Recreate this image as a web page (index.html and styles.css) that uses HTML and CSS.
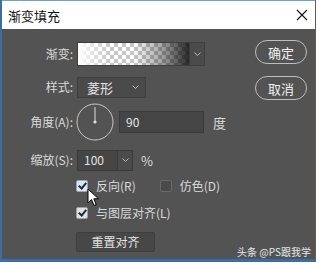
FILE: index.html
```html
<!DOCTYPE html>
<html lang="zh">
<head>
  <meta charset="UTF-8">
  <title>渐变填充</title>
  <link rel="stylesheet" href="styles.css">
</head>
<body>
  <div class="window">
    <div class="titlebar">
      <span class="title">渐变填充</span>
      <svg class="close" width="12" height="12" viewBox="0 0 12 12"><path d="M1 1L11 11M11 1L1 11" stroke="#111" stroke-width="1.1"/></svg>
    </div>

    <div class="body">
      <div class="form">
        <div class="row grad-row">
          <span class="label">渐变:</span>
          <div class="gradient">
            <div class="swatch"></div>
            <div class="drop"><svg width="7" height="5" viewBox="0 0 7 5"><path d="M0.5 0.5L3.5 3.5L6.5 0.5" stroke="#bbb" fill="none"/></svg></div>
          </div>
        </div>

        <div class="row style-row">
          <span class="label">样式:</span>
          <div class="select">
            <span>菱形</span>
            <svg width="7" height="5" viewBox="0 0 7 5"><path d="M0.5 0.5L3.5 3.5L6.5 0.5" stroke="#bbb" fill="none"/></svg>
          </div>
        </div>

        <div class="row angle-row">
          <span class="label">角度(A):</span>
          <svg class="dial" width="38" height="38" viewBox="0 0 38 38">
            <circle cx="19" cy="19" r="18" stroke="#c8c8c8" stroke-width="1" fill="none"/>
            <line x1="19" y1="4" x2="19" y2="19" stroke="#ddd" stroke-width="1"/>
            <circle cx="19" cy="19" r="1.6" fill="#ddd"/>
          </svg>
          <div class="input wide">90</div>
          <span class="unit">度</span>
        </div>

        <div class="row scale-row">
          <span class="label">缩放(S):</span>
          <div class="combo">
            <div class="input small">100</div>
            <div class="drop"><svg width="7" height="5" viewBox="0 0 7 5"><path d="M0.5 0.5L3.5 3.5L6.5 0.5" stroke="#bbb" fill="none"/></svg></div>
          </div>
          <span class="unit pct">%</span>
        </div>

        <div class="checks">
          <div class="check-line first">
            <label class="check"><span class="box on"></span>反向(R)</label>
            <label class="check"><span class="box"></span>仿色(D)</label>
            <svg class="cursor" width="14" height="20" viewBox="0 0 14 20"><path d="M1 1L1 15L4.5 11.5L7 17.5L9.2 16.6L6.8 10.8L11.5 10.8Z" fill="#fff" stroke="#000" stroke-width="1"/></svg>
          </div>
          <div class="check-line second">
            <label class="check"><span class="box on light"></span>与图层对齐(L)</label>
          </div>
          <div class="btn-row"><span class="reset">重置对齐</span></div>
        </div>
      </div>

      <div class="actions">
        <span class="btn">确定</span>
        <span class="btn">取消</span>
      </div>

      <span class="mark">头条 @PS跟我学</span>
    </div>
  </div>
</body>
</html>
```

FILE: styles.css
```css
* { box-sizing: border-box; }
html, body { margin: 0; padding: 0; }
body { width: 319px; height: 264px; background: #fff; font-family: "Noto Sans CJK SC", "Noto Sans", sans-serif; line-height: 1; overflow: hidden; }

.window { width: 316px; height: 262px; border-left: 2px solid #3a6ea5; border-bottom: 3px solid #3a6ea5; border-right: 1px solid #6b5a4a; background: #535353; display: flex; flex-direction: column; }
.titlebar { height: 29px; flex: none; background: #fff; border-top: 1px solid #6aa0d8; display: flex; align-items: center; justify-content: space-between; padding: 0 7px 0 6px; }
.title { font-size: 13px; color: #111; }
.close { display: block; }

.body { position: relative; flex: 1; display: flex; color: #dadada; font-size: 12px; }
.form { width: 251px; padding-top: 13px; }
.row { display: flex; align-items: center; }
.label { width: 75px; text-align: right; padding-right: 4px; }

.grad-row { height: 24px; }
.gradient { display: flex; height: 24px; border: 1px solid #3e3e3e; }
.swatch { width: 111px; height: 22px;
  background:
    linear-gradient(90deg, rgba(255,255,255,1) 0%, rgba(255,255,255,0.6) 10%, rgba(255,255,255,0) 30%, rgba(0,0,0,0) 50%, rgba(0,0,0,0.35) 75%, rgba(20,20,20,0.9) 100%),
    repeating-conic-gradient(#c6c6c6 0 25%, #ffffff 0 50%) 0 0 / 8px 8px; }
.drop { width: 15px; display: flex; align-items: center; justify-content: center; background: #4b4b4b; border-left: 1px solid #3e3e3e; }

.style-row { height: 20px; margin-top: 11px; }
.select { width: 69px; height: 21px; display: flex; align-items: center; justify-content: space-between; padding: 0 6px 0 9px; background: #4a4a4a; border: 1px solid #3e3e3e; font-size: 13px; color: #e4e4e4; }

.angle-row { height: 38px; margin-top: 6px; }
.dial { display: block; margin-left: -1px; margin-right: 5px; }
.input { height: 22px; background: #454545; border: 1px solid #3a3a3a; padding-left: 6px; display: flex; align-items: center; font-size: 12px; color: #e4e4e4; }
.input.wide { width: 85px; }
.unit { margin-left: 9px; font-size: 13px; }

.scale-row { height: 20px; margin-top: 9px; }
.combo { display: flex; height: 21px; }
.combo .input { height: 21px; }
.input.small { width: 41px; }
.combo .drop { width: 15px; height: 21px; border: 1px solid #3a3a3a; border-left: none; }
.unit.pct { margin-left: 8px; }

.checks { padding-left: 74px; }
.check-line { position: relative; display: flex; gap: 24px; height: 16px; align-items: center; }
.check-line.first { margin-top: 8px; }
.check-line.second { margin-top: 11px; }
.check { display: flex; align-items: center; gap: 8px; font-size: 12px; }
.box { width: 12px; height: 12px; border: 1px solid #6a6a6a; border-radius: 2px; background: #4a4a4a; position: relative; }
.box.on { background: #dfe6f2; border-color: #9aa6b8; }
.box.on.light { background: #e2e2e2; border-color: #a0a0a0; }
.box.on::after { content: ""; position: absolute; left: 3px; top: 0px; width: 3px; height: 6px; border: solid #1a2a4a; border-width: 0 2px 2px 0; transform: rotate(40deg); }
.cursor { position: absolute; left: 11px; top: 10px; }
.btn-row { display: flex; margin-top: 11px; }
.reset { width: 79px; height: 20px; display: flex; align-items: center; justify-content: center; background: #474747; border: 1px solid #3e3e3e; border-radius: 2px; font-size: 12px; color: #e4e4e4; }

.actions { display: flex; flex-direction: column; gap: 12px; padding-top: 11px; padding-left: 2px; }
.btn { width: 52px; height: 24px; border: 1.5px solid #bdbdbd; border-radius: 12px; display: flex; align-items: center; justify-content: center; font-size: 13px; color: #f0f0f0; }

.mark { position: absolute; right: 4px; bottom: 2px; font-size: 10px; color: #e8e8e8; }
```
